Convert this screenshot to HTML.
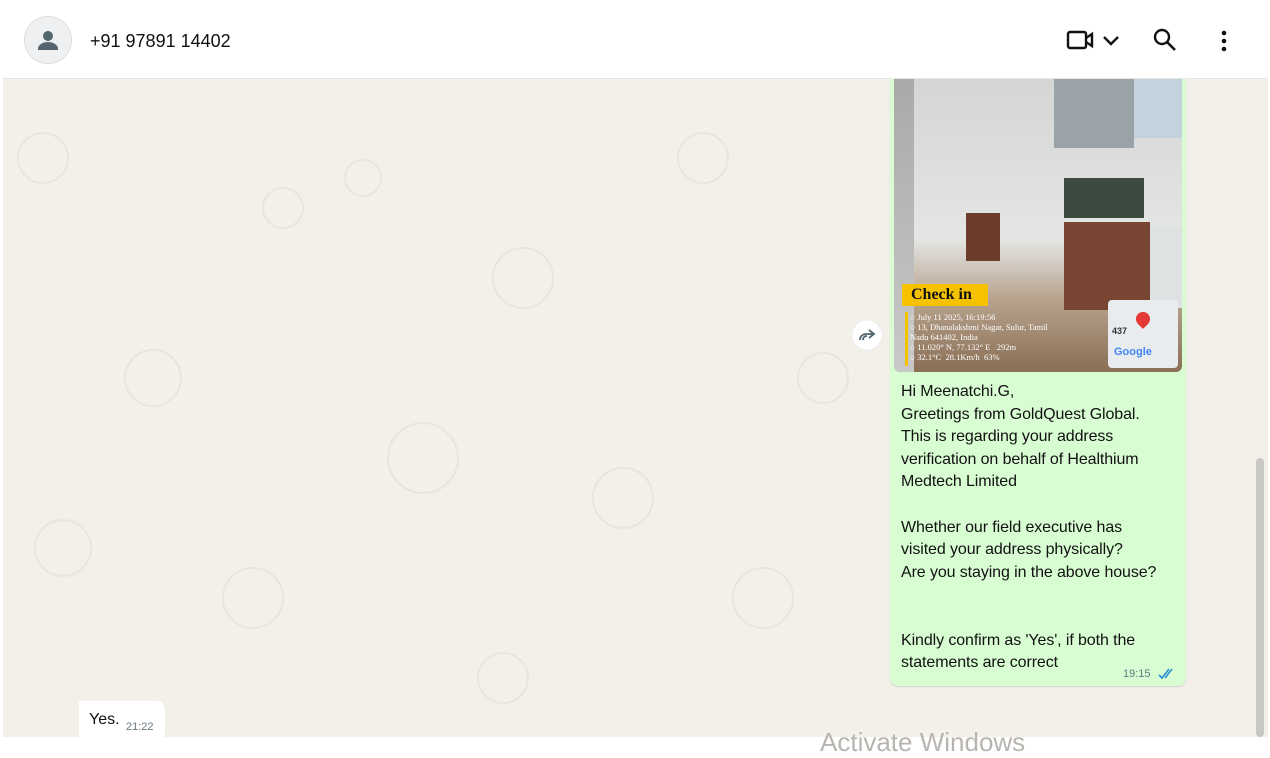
<!DOCTYPE html>
<html><head><meta charset="utf-8"><style>
*{margin:0;padding:0;box-sizing:border-box}
body{width:1270px;height:737px;overflow:hidden;background:#fff;font-family:"Liberation Sans",sans-serif;position:relative}
.chat{position:absolute;left:3px;top:78px;width:1265px;height:659px;background:#f3efe9;overflow:hidden}
.hdr{position:absolute;left:3px;top:1px;width:1265px;height:78px;background:#fff;border-bottom:1px solid #e6e6e6;z-index:5}
.av{position:absolute;left:21px;top:15px;width:48px;height:48px;border-radius:50%;background:#eef0f1;border:1px solid #ddd}
.name{position:absolute;left:87px;top:30px;font-size:18px;color:#111}
.bub{position:absolute;left:890px;top:60px;width:296px;height:626px;background:#d9fdd3;border-radius:8px;box-shadow:0 1px 1px rgba(0,0,0,.12)}
.img{position:absolute;left:894px;top:78px;width:288px;height:294px;border-radius:0 0 6px 6px;overflow:hidden;background:linear-gradient(#d4d6d6,#e4e5e4 55%,#b8a48e 75%,#8a6e55)}
.txt{position:absolute;left:901px;top:381px;font-size:16px;line-height:22.6px;color:#111;letter-spacing:-.1px}
.scroll{position:absolute;left:1256px;top:458px;width:8px;height:279px;background:#c9c7c4;border-radius:4px}
.yes{position:absolute;left:79px;top:701px;width:86px;height:40px;background:#fff;border-radius:0 8px 8px 8px}
</style></head><body>
<div class="chat">
<svg width="1265" height="659" style="position:absolute;left:0;top:0;opacity:.5">
<g fill="none" stroke="#e4dbd0" stroke-width="2">
<circle cx="40" cy="80" r="25"/><circle cx="280" cy="130" r="20"/><circle cx="520" cy="200" r="30"/><circle cx="700" cy="80" r="25"/><circle cx="150" cy="300" r="28"/><circle cx="420" cy="380" r="35"/><circle cx="620" cy="420" r="30"/><circle cx="60" cy="470" r="28"/><circle cx="250" cy="520" r="30"/><circle cx="760" cy="520" r="30"/><circle cx="500" cy="600" r="25"/><circle cx="820" cy="300" r="25"/><circle cx="360" cy="100" r="18"/>
</g></svg>
</div>
<div class="hdr">
<div class="av"><svg width="48" height="48" viewBox="0 0 48 48"><circle cx="23" cy="19" r="5" fill="#54656f"/><path d="M13 32c0-5 6-7 10-7s10 2 10 7v1H13z" fill="#54656f"/></svg></div>
<div class="name">+91 97891 14402</div>
<svg style="position:absolute;left:1063px;top:27px" width="60" height="26" viewBox="0 0 60 26"><rect x="2" y="4" width="18" height="16" rx="2" fill="none" stroke="#111" stroke-width="2.4"/><path d="M20 10l6-4v12l-6-4" fill="none" stroke="#111" stroke-width="2.4"/><path d="M38 9l7 7 7-7" fill="none" stroke="#111" stroke-width="2.4"/></svg>
<svg style="position:absolute;left:1150px;top:27px" width="24" height="24"><circle cx="9" cy="9" r="7" fill="none" stroke="#111" stroke-width="2.4"/><path d="M14 14l8 8" stroke="#111" stroke-width="2.6"/></svg>
<svg style="position:absolute;left:1216px;top:28px" width="10" height="24"><circle cx="5" cy="4" r="2.3" fill="#111"/><circle cx="5" cy="12" r="2.3" fill="#111"/><circle cx="5" cy="20" r="2.3" fill="#111"/></svg>
</div>
<div class="bub"></div>
<div class="img">
<div style="position:absolute;left:0;top:0;width:20px;height:294px;background:linear-gradient(#a9aaa8,#c8c9c8)"></div>
<div style="position:absolute;left:160px;top:0;width:80px;height:70px;background:#9aa4a8"></div>
<div style="position:absolute;left:240px;top:0;width:48px;height:60px;background:#c4d2de"></div>
<div style="position:absolute;left:170px;top:100px;width:80px;height:40px;background:#3c4a40"></div>
<div style="position:absolute;left:72px;top:135px;width:34px;height:48px;background:#6e3c2a"></div>
<div style="position:absolute;left:170px;top:144px;width:86px;height:88px;background:#7a4634"></div>
<div style="position:absolute;left:256px;top:150px;width:32px;height:80px;background:#dfe2e3"></div>
<div style="position:absolute;left:8px;top:206px;width:86px;height:22px;background:#f6c200;font-family:'Liberation Serif',serif;font-weight:bold;font-size:16px;padding:2px 0 0 9px;color:#111">Check in</div>
<div style="position:absolute;left:11px;top:234px;width:3px;height:54px;background:#f6c200"></div>
<div style="position:absolute;left:16px;top:234px;font-family:'Liberation Serif',serif;font-size:8.5px;line-height:10px;color:#fff">○ July 11 2025, 16:19:56<br>○ 13, Dhanalakshmi Nagar, Sulur, Tamil<br>Nadu 641402, India<br>○ 11.020° N, 77.132° E &nbsp; 292m<br>○ 32.1°C &nbsp;28.1Km/h &nbsp;63%</div>
<div style="position:absolute;left:214px;top:222px;width:70px;height:68px;background:#e8ecee;border-radius:4px"><div style="position:absolute;left:28px;top:12px;width:14px;height:14px;border-radius:50% 50% 50% 0;transform:rotate(-45deg);background:#e53935"></div><div style="position:absolute;left:4px;top:26px;font-size:9px;font-weight:bold;color:#333">437</div><div style="position:absolute;left:6px;top:46px;font-size:11px;font-weight:bold;color:#4285f4">Google</div></div>
</div>
<svg style="position:absolute;left:851px;top:319px" width="32" height="32"><circle cx="16" cy="16" r="15" fill="#fff" stroke="#eee"/><path d="M9 21c0-4 3-6 7-6h6M18 11l5 4-5 4M12 21c0-3 2-4 4-4" fill="none" stroke="#54656f" stroke-width="1.8"/></svg>
<div class="txt">Hi Meenatchi.G,<br>Greetings from GoldQuest Global.<br>This is regarding your address<br>verification on behalf of Healthium<br>Medtech Limited<br><br>Whether our field executive has<br>visited your address physically?<br>Are you staying in the above house?<br><br><br>Kindly confirm as 'Yes', if both the<br>statements are correct</div>
<div style="position:absolute;left:1123px;top:668px;font-size:11px;color:#667781">19:15</div>
<svg style="position:absolute;left:1158px;top:667px" width="20" height="14"><path d="M1 8l3 3 7-9M7 11l7-9" fill="none" stroke="#2a8fd6" stroke-width="1.6"/></svg>
<div class="yes"></div>
<div style="position:absolute;left:89px;top:711px;font-size:16px;color:#111">Yes.</div>
<div style="position:absolute;left:126px;top:721px;font-size:11px;color:#667781">21:22</div>
<div style="position:absolute;left:820px;top:727px;font-size:26px;color:#b8b4b0">Activate Windows</div>
<div class="scroll"></div>
</body></html>
